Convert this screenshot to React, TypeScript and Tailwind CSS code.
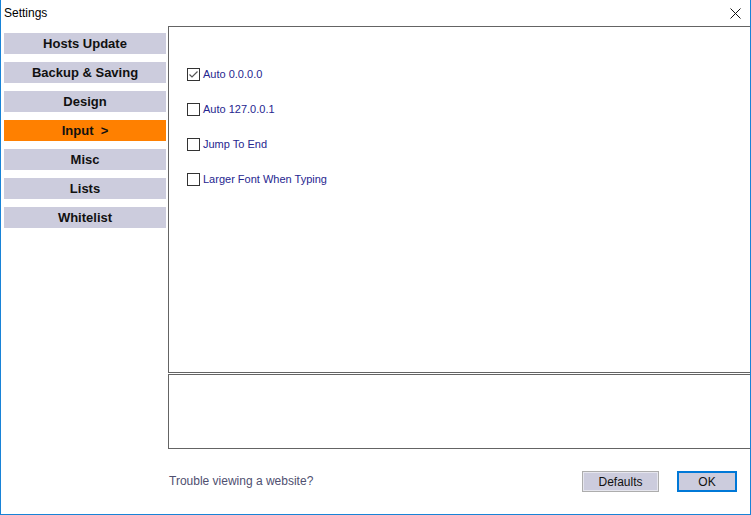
import React from 'react';

const sections = ['Hosts Update', 'Backup & Saving', 'Design', 'Input', 'Misc', 'Lists', 'Whitelist'];

const options = [
  { label: 'Auto 0.0.0.0', checked: true },
  { label: 'Auto 127.0.0.1', checked: false },
  { label: 'Jump To End', checked: false },
  { label: 'Larger Font When Typing', checked: false },
];

function CheckBox({ checked }: { checked: boolean }) {
  return (
    <div className="w-[13px] h-[13px] border border-[#333333] bg-white flex items-center justify-center">
      {checked && (
        <svg width="11" height="11" viewBox="0 0 11 11">
          <path d="M1.5 5.5 L4 8 L9.5 2.5" fill="none" stroke="#555555" strokeWidth="1.2" />
        </svg>
      )}
    </div>
  );
}

export default function App() {
  const active = 'Input';

  return (
    <div
      className="w-[751px] h-[515px] bg-white border-l border-r border-b border-[#1883d7] flex flex-col"
      style={{ fontFamily: '"Liberation Sans", Arial, sans-serif' }}
    >
      {/* Title bar */}
      <div className="h-[26px] flex items-center justify-between pl-[3px] pr-[9px] shrink-0">
        <span className="text-[12px] text-black">Settings</span>
        <svg width="11" height="11" viewBox="0 0 11 11">
          <path d="M0.5 0.5 L10.5 10.5 M10.5 0.5 L0.5 10.5" stroke="#111111" strokeWidth="1" />
        </svg>
      </div>

      <div className="flex flex-1 pl-[3px]">
        {/* Sidebar */}
        <div className="w-[162px] pt-[7px] flex flex-col gap-[8px] shrink-0">
          {sections.map((s) => (
            <div
              key={s}
              className={`h-[21px] flex items-center justify-center text-[13px] font-bold text-[#111111] ${
                s === active ? 'bg-[#ff8000]' : 'bg-[#ccccdd]'
              }`}
            >
              {s === active ? <span>Input&nbsp;&nbsp;&gt;</span> : s}
            </div>
          ))}
        </div>

        {/* Right column */}
        <div className="flex-1 ml-[2px] flex flex-col">
          <div className="h-[347px] border-t border-l border-b border-[#646464] pl-[18px] pt-[41px] flex flex-col gap-[22px]">
            {options.map((o) => (
              <div key={o.label} className="h-[13px] flex items-center gap-[3px]">
                <CheckBox checked={o.checked} />
                <span className="text-[11px] text-[#26268f] leading-none">{o.label}</span>
              </div>
            ))}
          </div>
          <div className="h-[75px] mt-[1px] border-t border-l border-b border-[#646464]" />

          <div className="mt-[22px] h-[21px] flex items-center pl-[1px] pr-[13px]">
            <span className="text-[12px] text-[#4f5070] flex-1 -mt-[2px]">Trouble viewing a website?</span>
            <div className="w-[77px] h-[21px] border border-[#adadad] bg-[#ccccdd] shadow-[inset_0_0_0_1px_#e6e6ee] flex items-center justify-center text-[12px] text-[#111111]">
              Defaults
            </div>
            <div className="w-[60px] h-[21px] ml-[18px] border-2 border-[#0078d7] bg-[#ccccdd] flex items-center justify-center text-[12px] text-[#111111]">
              OK
            </div>
          </div>
        </div>
      </div>
    </div>
  );
}
